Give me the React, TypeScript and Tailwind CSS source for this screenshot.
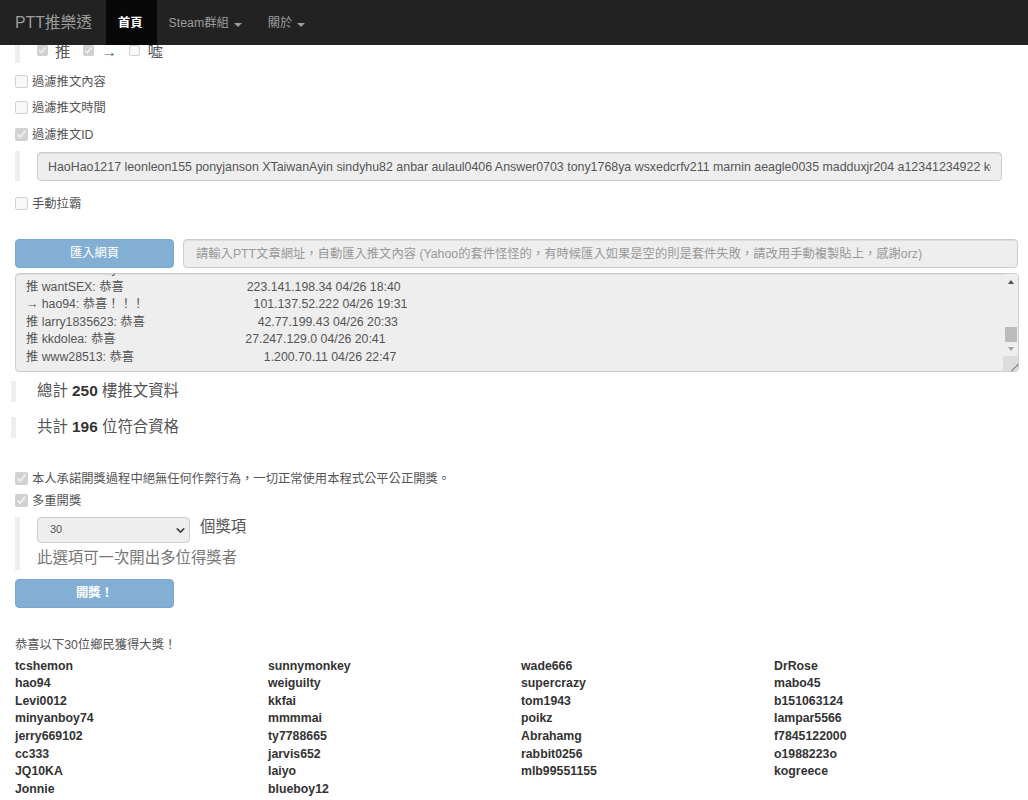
import React from "react";
import { ChevronDown } from "lucide-react";

const winners = [
  ["tcshemon", "hao94", "Levi0012", "minyanboy74", "jerry669102", "cc333", "JQ10KA", "Jonnie"],
  ["sunnymonkey", "weiguilty", "kkfai", "mmmmai", "ty7788665", "jarvis652", "laiyo", "blueboy12"],
  ["wade666", "supercrazy", "tom1943", "poikz", "Abrahamg", "rabbit0256", "mlb99551155"],
  ["DrRose", "mabo45", "b151063124", "lampar5566", "f7845122000", "o1988223o", "kogreece"],
];

const pushLines = [
  "推 wantSEX: 恭喜                                    223.141.198.34 04/26 18:40",
  "→ hao94: 恭喜！！！                                101.137.52.222 04/26 19:31",
  "推 larry1835623: 恭喜                                 42.77.199.43 04/26 20:33",
  "推 kkdolea: 恭喜                                      27.247.129.0 04/26 20:41",
  "推 www28513: 恭喜                                      1.200.70.11 04/26 22:47",
];

const ids =
  "HaoHao1217 leonleon155 ponyjanson XTaiwanAyin sindyhu82 anbar aulaul0406 Answer0703 tony1768ya wsxedcrfv211 marnin aeagle0035 madduxjr204 a12341234922 kotori0710 tcshemon";

const CheckRow = ({ label, checked, className }: { label: string; checked?: boolean; className: string }) => (
  <label className={`flex items-center h-[18px] ${className}`}>
    <input type="checkbox" disabled defaultChecked={checked} className="m-0 w-[13px] h-[13px]" />
    <span className="ml-[4px] mt-[4px] text-[#555]">{label}</span>
  </label>
);

const App = () => {
  return (
    <div className="h-[800px] overflow-hidden bg-white text-[12.3px] leading-[17.6px] text-[#333] font-['Liberation_Sans','Noto_Sans_CJK_TC',sans-serif]">
      {/* Navbar */}
      <nav className="relative z-10 flex h-[45px] bg-[#222] text-[#9d9d9d]">
        <span className="pl-[15px] pr-[14px] text-[15.75px] leading-[45px]">PTT推樂透</span>
        <span className="pl-[12px] pr-[14px] pt-px bg-[#080808] text-white font-bold leading-[45px]">首頁</span>
        <span className="flex items-center pl-[12px] pr-[14px] pt-[2px]">
          Steam群組
          <i className="ml-[5px] mt-[2px] border-x-4 border-t-4 border-x-transparent border-t-[#9d9d9d]" />
        </span>
        <span className="flex items-center pl-[12px] pt-[2px]">
          關於
          <i className="ml-[5px] mt-[2px] border-x-4 border-t-4 border-x-transparent border-t-[#9d9d9d]" />
        </span>
      </nav>

      <div className="pl-[15px]">
        {/* Push types, scrolled under the navbar */}
        <div className="flex items-start h-[18px] border-l-[5px] border-[#eee] pl-[17px] text-[15.4px] text-[#555] leading-[14px]">
          <input type="checkbox" disabled defaultChecked className="m-0 w-[11px] h-[11px]" />
          <span className="ml-[7px]">推</span>
          <input type="checkbox" disabled defaultChecked className="m-0 ml-[13px] w-[11px] h-[11px]" />
          <span className="ml-[7px]">→</span>
          <input type="checkbox" disabled className="m-0 ml-[12px] w-[11px] h-[11px]" />
          <span className="ml-[8px]">噓</span>
        </div>

        <CheckRow label="過濾推文內容" className="mt-[9px]" />
        <CheckRow label="過濾推文時間" className="mt-[8px]" />
        <CheckRow label="過濾推文ID" checked className="mt-[9px]" />

        <div className="mt-[8px] h-[30px] border-l-[5px] border-[#eee] pl-[17px]">
          <input
            disabled
            value={ids}
            className="w-[965px] h-[29px] mt-px px-[10px] bg-[#eee] border border-[#ccc] rounded text-[12.4px] text-[#555] shadow-[inset_0_1px_1px_rgba(0,0,0,0.075)]"
          />
        </div>

        <CheckRow label="手動拉霸" className="mt-[13px]" />

        {/* Import from web */}
        <div className="flex mt-[27px] gap-[9px]">
          <button disabled className="w-[159px] h-[29px] bg-[#84afd5] border border-[#7aa8d0] rounded text-white">
            匯入網頁
          </button>
          <input
            disabled
            placeholder="請輸入PTT文章網址，自動匯入推文內容 (Yahoo的套件怪怪的，有時候匯入如果是空的則是套件失敗，請改用手動複製貼上，感謝orz)"
            className="w-[835px] h-[29px] px-[12px] bg-[#eee] border border-[#ccc] rounded placeholder:text-[#999] shadow-[inset_0_1px_1px_rgba(0,0,0,0.075)]"
          />
        </div>

        {/* Push text box */}
        <div className="relative mt-[5px] w-[1004px] h-[99px] overflow-hidden bg-[#eee] border border-[#ccc] rounded text-[#555] shadow-[inset_0_1px_1px_rgba(0,0,0,0.075)]">
          <div className="pl-[10px] -mt-[13px] whitespace-pre">
            <div>推 kevin123456y: 恭喜</div>
            {pushLines.map((line) => (
              <div key={line}>{line}</div>
            ))}
          </div>
          <div className="absolute right-0 top-0 bottom-0 w-[15px] flex flex-col items-center bg-[#eee]">
            <i className="mt-[6px] border-x-[3px] border-b-[4px] border-x-transparent border-b-[#505050]" />
            <div className="mt-[43px] w-[12px] h-[15px] bg-[#bbb]" />
            <i className="mt-[5px] border-x-[3px] border-t-[4px] border-x-transparent border-t-[#a3a3a3]" />
            <div className="relative mt-auto w-[15px] h-[15px] bg-[#dcdcdc] overflow-hidden">
              <i className="absolute right-[-3px] bottom-[3px] w-[12px] h-px bg-[#777] -rotate-45" />
              <i className="absolute right-[-3px] bottom-[0px] w-[6px] h-px bg-[#777] -rotate-45" />
            </div>
          </div>
        </div>

        {/* Totals */}
        <div className="-ml-[4px] mt-[9px] h-[21px] border-l-[5px] border-[#eee] pl-[21px] text-[15.4px] text-[#555] leading-[20px]">
          總計 <b className="text-[#333]">250</b> 樓推文資料
        </div>
        <div className="-ml-[4px] mt-[15px] h-[21px] border-l-[5px] border-[#eee] pl-[21px] text-[15.4px] text-[#555] leading-[20px]">
          共計 <b className="text-[#333]">196</b> 位符合資格
        </div>

        <CheckRow label="本人承諾開獎過程中絕無任何作弊行為，一切正常使用本程式公平公正開獎。" checked className="mt-[31px]" />
        <CheckRow label="多重開獎" checked className="mt-[4px]" />

        {/* Multi draw */}
        <div className="mt-[8px] h-[53px] border-l-[5px] border-[#eee] pl-[17px] text-[15.4px]">
          <div className="flex items-start">
            <div className="relative w-[153px] h-[26px]">
              <select disabled className="appearance-none w-full h-full pl-[12px] bg-[#eee] border border-[#ccc] rounded text-[11px] text-[#555]">
                <option>30</option>
              </select>
              <ChevronDown className="absolute right-[3px] top-[7px] w-[13px] h-[13px] text-[#444] pointer-events-none" strokeWidth={3} />
            </div>
            <span className="ml-[10px] leading-[20px] text-[#555]">個獎項</span>
          </div>
          <div className="mt-[5px] leading-[20px] text-[#777]">此選項可一次開出多位得獎者</div>
        </div>

        <button disabled className="block mt-[9px] w-[159px] h-[29px] bg-[#84afd5] border border-[#7aa8d0] rounded text-white font-bold">
          開獎！
        </button>

        {/* Winners */}
        <p className="mt-[29px] text-[#555]">恭喜以下30位鄉民獲得大獎！</p>
        <div className="grid grid-cols-[253px_253px_253px_253px] mt-[3px] font-bold">
          {winners.map((col) => (
            <div key={col[0]}>
              {col.map((name) => (
                <div key={name}>{name}</div>
              ))}
            </div>
          ))}
        </div>
      </div>
    </div>
  );
};

export default App;
